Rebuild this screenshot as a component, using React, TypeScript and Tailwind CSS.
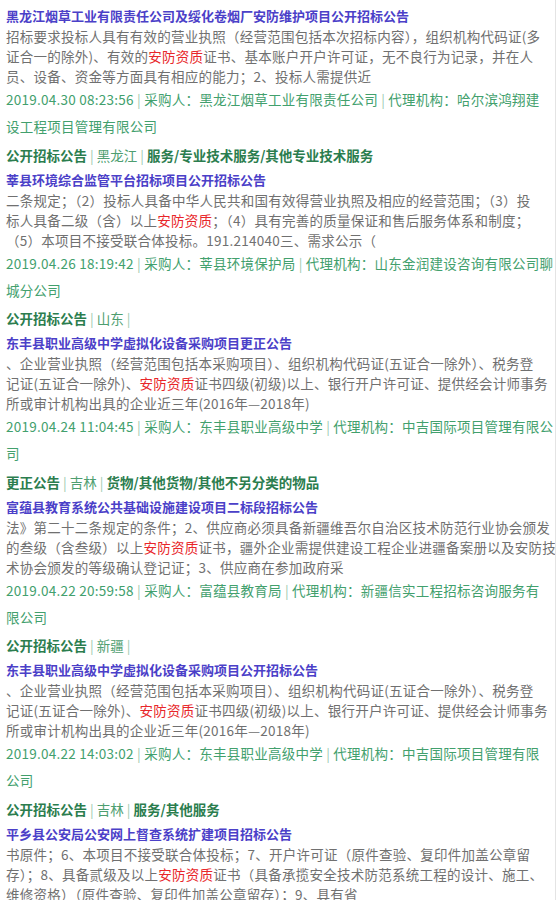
import React from 'react'

interface Notice {
  title: string
  body: string[]
  date?: string
  buyer?: string
  agent?: [string, string]
  type?: string
  region?: string
  category?: string
}

const dongfengBody = [
  '、企业营业执照（经营范围包括本采购项目）、组织机构代码证(五证合一除外）、税务登',
  '记证(五证合一除外)、安防资质证书四级(初级)以上、银行开户许可证、提供经会计师事务',
  '所或审计机构出具的企业近三年(2016年—2018年)',
]

const notices: Notice[] = [
  {
    title: '黑龙江烟草工业有限责任公司及绥化卷烟厂安防维护项目公开招标公告',
    body: [
      '招标要求投标人具有有效的营业执照（经营范围包括本次招标内容），组织机构代码证(多',
      '证合一的除外)、有效的安防资质证书、基本账户开户许可证，无不良行为记录，并在人',
      '员、设备、资金等方面具有相应的能力；2、投标人需提供近',
    ],
    date: '2019.04.30 08:23:56',
    buyer: '黑龙江烟草工业有限责任公司',
    agent: ['哈尔滨鸿翔建', '设工程项目管理有限公司'],
    type: '公开招标公告',
    region: '黑龙江',
    category: '服务/专业技术服务/其他专业技术服务',
  },
  {
    title: '莘县环境综合监管平台招标项目公开招标公告',
    body: [
      '二条规定；（2）投标人具备中华人民共和国有效得营业执照及相应的经营范围；（3）投',
      '标人具备二级（含）以上安防资质；（4）具有完善的质量保证和售后服务体系和制度；',
      '（5）本项目不接受联合体投标。191.214040三、需求公示（',
    ],
    date: '2019.04.26 18:19:42',
    buyer: '莘县环境保护局',
    agent: ['山东金润建设咨询有限公司聊', '城分公司'],
    type: '公开招标公告',
    region: '山东',
  },
  {
    title: '东丰县职业高级中学虚拟化设备采购项目更正公告',
    body: dongfengBody,
    date: '2019.04.24 11:04:45',
    buyer: '东丰县职业高级中学',
    agent: ['中吉国际项目管理有限公', '司'],
    type: '更正公告',
    region: '吉林',
    category: '货物/其他货物/其他不另分类的物品',
  },
  {
    title: '富蕴县教育系统公共基础设施建设项目二标段招标公告',
    body: [
      '法》第二十二条规定的条件；2、供应商必须具备新疆维吾尔自治区技术防范行业协会颁发',
      '的叁级（含叁级）以上安防资质证书，疆外企业需提供建设工程企业进疆备案册以及安防技',
      '术协会颁发的等级确认登记证；3、供应商在参加政府采',
    ],
    date: '2019.04.22 20:59:58',
    buyer: '富蕴县教育局',
    agent: ['新疆信实工程招标咨询服务有', '限公司'],
    type: '公开招标公告',
    region: '新疆',
  },
  {
    title: '东丰县职业高级中学虚拟化设备采购项目公开招标公告',
    body: dongfengBody,
    date: '2019.04.22 14:03:02',
    buyer: '东丰县职业高级中学',
    agent: ['中吉国际项目管理有限', '公司'],
    type: '公开招标公告',
    region: '吉林',
    category: '服务/其他服务',
  },
  {
    title: '平乡县公安局公安网上督查系统扩建项目招标公告',
    body: [
      '书原件；6、本项目不接受联合体投标；7、开户许可证（原件查验、复印件加盖公章留',
      '存）；8、具备贰级及以上安防资质证书（具备承揽安全技术防范系统工程的设计、施工、',
      '维修资格）（原件查验、复印件加盖公章留存）；9、具有省',
    ],
  },
]

// highlight every 安防资质 in red
function Highlight({ text }: { text: string }) {
  const parts = text.split('安防资质')
  return (
    <>
      {parts.map((p, i) => (
        <React.Fragment key={i}>
          {i > 0 && <span className="text-[#e8262a]">安防资质</span>}
          {p}
        </React.Fragment>
      ))}
    </>
  )
}

function Sep() {
  return <span className="text-[#9ccab0]"> | </span>
}

function NoticeItem({ n }: { n: Notice }) {
  return (
    <div>
      <div className="text-[13px] leading-[21px] font-bold text-[#4b40c8] whitespace-nowrap overflow-hidden">
        {n.title}
      </div>
      <div className="text-[13.5px] leading-[20px] text-[#707070] tracking-[0.25px]">
        {n.body.map((line, i) => (
          <div key={i} className="whitespace-nowrap">
            <Highlight text={line} />
          </div>
        ))}
      </div>
      {n.date && n.agent && (
        <>
          <div className="text-[13.5px] leading-[27px] text-[#42a06d] tracking-[0.25px]">
            <div className="whitespace-nowrap">
              {n.date}
              <Sep />
              采购人：{n.buyer}
              <Sep />
              代理机构：{n.agent[0]}
            </div>
            <div className="whitespace-nowrap">{n.agent[1]}</div>
          </div>
          <div className="mt-[0.5px] text-[13.5px] leading-[28px] text-[#2b7d4e] whitespace-nowrap">
            <span className="font-bold">{n.type}</span>
            <Sep />
            <span className="text-[#4e9e70]">{n.region}</span>
            <Sep />
            {n.category && <span className="font-bold">{n.category}</span>}
          </div>
        </>
      )}
    </div>
  )
}

export default function App() {
  return (
    <div
      className="h-[900px] w-[556px] overflow-hidden bg-white border-r border-[#e4e4e4] pt-[5px] pl-[6px] pr-[6px]"
      style={{ fontFamily: '"Noto Sans CJK SC", "Noto Sans", sans-serif' }}
    >
      {notices.map((n, i) => (
        <NoticeItem key={i} n={n} />
      ))}
    </div>
  )
}
